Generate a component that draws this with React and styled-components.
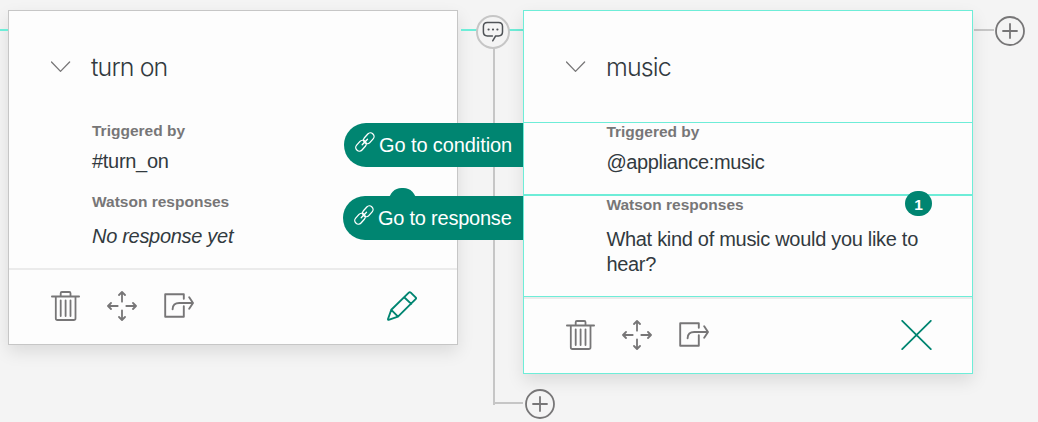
import React from 'react';
import styled, { createGlobalStyle } from 'styled-components';

const TEAL = '#008571';
const MINT = '#6eedd8';
const GREY = '#c6c6c6';

const GlobalStyle = createGlobalStyle`
  *, *::before, *::after { box-sizing: border-box; }
  body { margin: 0; background: #f4f4f4; font-family: "Liberation Sans", Arial, sans-serif; }
`;

const Canvas = styled.main`
  position: relative;
  width: 1038px;
  height: 422px;
  overflow: hidden;
  background: #f4f4f4;
`;

const Node = styled.article`
  position: absolute;
  top: 10px;
  left: ${(p) => p.$left}px;
  width: 450px;
  height: ${(p) => p.$height}px;
  display: flex;
  flex-direction: column;
  background: #fdfdfd;
  border: 1px solid ${(p) => (p.$active ? MINT : GREY)};
  box-shadow: 0 7px 16px rgba(0, 0, 0, 0.1);
`;

const Header = styled.header`
  height: 111px;
  display: flex;
  align-items: center;
  gap: 20px;
  padding: 1px 0 0 42px;
`;

const Title = styled.h2`
  margin: 0;
  font: 300 25px/30px Inter, sans-serif;
  letter-spacing: ${(p) => p.$spacing || 0}px;
  color: #323a3f;
`;

const Section = styled.section`
  position: relative;
  height: ${(p) => p.$height}px;
  padding: 0 40px 0 ${(p) => p.$inset || 83}px;
  border-top: ${(p) => p.$line || 0}px solid ${MINT};
`;

const Label = styled.h3`
  margin: 0 0 ${(p) => p.$gap}px;
  font-size: 15.5px;
  line-height: 18px;
  font-weight: 700;
  color: #777677;
`;

const Value = styled.p`
  margin: 0;
  font-size: 20px;
  line-height: 25px;
  font-style: ${(p) => (p.$italic ? 'italic' : 'normal')};
  letter-spacing: ${(p) => p.$spacing || -0.3}px;
  white-space: nowrap;
  color: #323a3f;
`;

const Footer = styled.footer`
  flex: 1;
  display: flex;
  align-items: center;
  gap: 27px;
  padding: 0 40px 3px 42px;
  border-top: 2px solid #ebebeb;
`;

const PrimaryAction = styled.span`
  display: flex;
  margin-left: auto;
`;

const Badge = styled.span`
  position: absolute;
  right: ${(p) => p.$right}px;
  top: -5px;
  width: 27px;
  height: 25px;
  border-radius: 12.5px;
  background: ${TEAL};
  color: #fff;
  font: 700 15.5px/27px "Liberation Sans", sans-serif;
  text-align: center;
`;

const JumpLink = styled.a`
  position: absolute;
  right: 515px;
  top: ${(p) => p.$top}px;
  width: ${(p) => p.$width}px;
  height: 44px;
  display: flex;
  align-items: center;
  gap: 4px;
  padding: 1px 0 0 11px;
  border-radius: 22px 0 0 22px;
  background: ${TEAL};
  color: #fff;
  font-size: 20px;
  letter-spacing: ${(p) => p.$spacing}px;
  white-space: nowrap;
`;

const LinkGlyph = styled.span`
  display: flex;
  margin-top: -7px;
`;

const Connector = styled.i`
  position: absolute;
  left: ${(p) => p.$x}px;
  top: ${(p) => p.$y}px;
  width: ${(p) => p.$w || 2}px;
  height: ${(p) => p.$h || 2}px;
  background: ${(p) => (p.$active ? MINT : GREY)};
`;

const CanvasIcon = styled.span`
  position: absolute;
  left: ${(p) => p.$x}px;
  top: ${(p) => p.$y}px;
  display: flex;
`;

const Icon = styled.svg.attrs({ 'aria-hidden': true })`
  display: block;
  flex: none;
  fill: none;
  stroke: ${(p) => p.$color || '#777677'};
  stroke-width: ${(p) => p.$weight || 1.8};
  stroke-linecap: round;
  stroke-linejoin: round;
`;

const Ring = styled.circle`
  fill: #f4f4f4;
  stroke: ${GREY};
  stroke-width: 2;
`;

const Chevron = () => (
  <Icon width="20" height="12" viewBox="0 0 20 12" $weight={1.3}>
    <path d="M.5 1 9.5 10.4 18.6 1" />
  </Icon>
);

const Trash = () => (
  <Icon width="29" height="30" viewBox="0 0 29 30">
    <path d="M.9 5.5h27.2M9.7 5.3V2.2q0-1.2 1.2-1.2h7.4q1.2 0 1.2 1.2v3.1M4.8 5.7v21.5q0 1.8 1.7 1.8h16.2q1.8 0 1.8-1.8V5.7M9.7 9.3v15.8M14.6 9.3v15.8M19.5 9.3v15.8" />
  </Icon>
);

const Move = () => (
  <Icon width="30" height="30" viewBox="0 0 30 30">
    <path d="M15 10.7V1.1M12 4l3-3 3 3M15 19.3v9.6M12 26l3 3 3-3M10.7 15H1.1M4 12l-3 3 3 3M19.3 15h9.6M26 12l3 3-3 3" />
  </Icon>
);

const JumpTo = () => (
  <Icon width="30" height="30" viewBox="0 0 30 30" $weight={1.9}>
    <path d="M19.8 7.8V3.2H1.2v22.6H19.8V15.3M8.6 18.2c0-4.2 2.5-6.2 6.6-6.2H28.6M25.2 6.2 29 12 25.2 17.8" />
  </Icon>
);

const Pencil = () => (
  <Icon width="30" height="30" viewBox="0 0 30 30" $color={TEAL} $weight={1.9}>
    <path d="M4.3 18.8 21.8 1.6q1-.9 2 0L28.6 6.4q.9.9 0 1.8L11 25.6 1.6 28.8Q.9 28.9 1 28ZM4.3 18.8l6.7 6.8M17.2 6.2l7 6.7" />
  </Icon>
);

const Close = () => (
  <Icon width="31" height="30" viewBox="0 0 31 30" $color={TEAL} $weight={1.8}>
    <path d="M1.2.8 29.8 29.2M29.8.8 1.2 29.2" />
  </Icon>
);

const Chain = () => (
  <Icon width="20" height="20" viewBox="0 0 20 20" $color="#fff" $weight={1.3}>
    <rect x="7.8" y="2.7" width="12" height="7.2" rx="3.5" transform="rotate(-48 13.8 6.3)" />
    <rect x="0" y="10.1" width="12" height="7.2" rx="3.5" transform="rotate(-48 6 13.7)" />
    <path d="M7.2 12.7 12.5 7.2" />
  </Icon>
);

const AddCircle = () => (
  <Icon width="30" height="30" viewBox="0 0 30 30">
    <circle cx="15" cy="15" r="14" fill="#f4f4f4" />
    <path d="M15 8v14M8 15h14" />
  </Icon>
);

const ChatCircle = () => (
  <Icon width="34" height="34" viewBox="0 0 34 34" $color="#4f5357" $weight={1.5}>
    <Ring cx="17" cy="17" r="16" />
    <path d="M16.7 25.8 19.6 21h2.8q4.1-.2 4.1-4v-5.5q0-4-4-4H11.4q-4 0-4 4V17q0 3.8 4 4h5" />
    <path strokeWidth="2" d="M12.5 14.5h.2M16.9 14.5h.2M21.3 14.5h.2" />
  </Icon>
);

const Actions = ({ children }) => (
  <Footer>
    <Trash />
    <Move />
    <JumpTo />
    <PrimaryAction>{children}</PrimaryAction>
  </Footer>
);

export default function App() {
  return (
    <>
      <GlobalStyle />
      <Canvas>
        <Node $left={8} $height={335}>
          <Header>
            <Chevron />
            <Title $spacing={-0.9}>turn on</Title>
          </Header>
          <Section $height={71}>
            <Label $gap={9}>Triggered by</Label>
            <Value>#turn_on</Value>
          </Section>
          <Section $height={75}>
            <Label $gap={13}>Watson responses</Label>
            <Value $italic>No response yet</Value>
            <Badge $right={41} />
          </Section>
          <Actions><Pencil /></Actions>
        </Node>

        <Connector $x={0} $y={29} $w={8} $active />
        <Connector $x={461} $y={29} $w={62} $active />
        <Connector $x={493} $y={40} $h={365} />
        <Connector $x={493} $y={402} $w={30} />
        <Connector $x={974} $y={29} $w={20} />

        <Node $left={523} $height={364} $active>
          <Header>
            <Chevron />
            <Title $spacing={-0.9}>music</Title>
          </Header>
          <Section $height={72} $line={1} $inset={82.4}>
            <Label $gap={9}>Triggered by</Label>
            <Value $spacing={-0.36}>@appliance:music</Value>
          </Section>
          <Section $height={102} $line={2} $inset={82.4}>
            <Label $gap={13}>Watson responses</Label>
            <Value>What kind of music would you like to<br />hear?</Value>
            <Badge $right={40}>1</Badge>
          </Section>
          <Section $height={1} $line={1} />
          <Actions><Close /></Actions>
        </Node>

        <JumpLink $top={123} $width={179} $spacing={-0.1}>
          <LinkGlyph><Chain /></LinkGlyph>Go to condition
        </JumpLink>
        <JumpLink $top={196} $width={180} $spacing={-0.23}>
          <LinkGlyph><Chain /></LinkGlyph>Go to response
        </JumpLink>

        <CanvasIcon $x={476} $y={15}><ChatCircle /></CanvasIcon>
        <CanvasIcon $x={995} $y={16}><AddCircle /></CanvasIcon>
        <CanvasIcon $x={525} $y={389}><AddCircle /></CanvasIcon>
      </Canvas>
    </>
  );
}
